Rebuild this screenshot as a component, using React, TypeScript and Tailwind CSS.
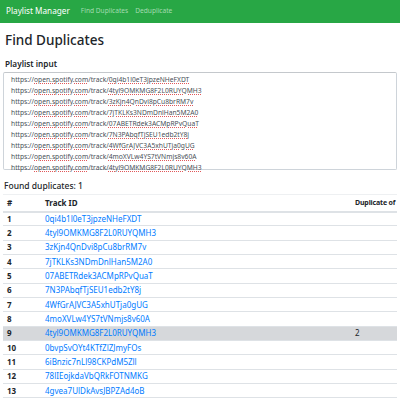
import React from 'react';

const urls = [
  '0qi4b1l0eT3jpzeNHeFXDT',
  '4tyl9OMKMG8F2L0RUYQMH3',
  '3zKjn4QnDvi8pCu8brRM7v',
  '7jTKLKs3NDmDnlHan5M2A0',
  '07ABETRdek3ACMpRPvQuaT',
  '7N3PAbqfTjSEU1edb2tY8j',
  '4WfGrAJVC3A5xhUTja0gUG',
  '4moXVLw4YS7tVNmjs8v60A',
  '4tyl9OMKMG8F2L0RUYQMH3',
];

const tracks = [
  '0qi4b1l0eT3jpzeNHeFXDT',
  '4tyl9OMKMG8F2L0RUYQMH3',
  '3zKjn4QnDvi8pCu8brRM7v',
  '7jTKLKs3NDmDnlHan5M2A0',
  '07ABETRdek3ACMpRPvQuaT',
  '7N3PAbqfTjSEU1edb2tY8j',
  '4WfGrAJVC3A5xhUTja0gUG',
  '4moXVLw4YS7tVNmjs8v60A',
  '4tyl9OMKMG8F2L0RUYQMH3',
  '0bvpSvOYt4KTfZlZJmyFOs',
  '6iBnzic7nLl98CKPdM5Zll',
  '78lIEojkdaVbQRkFOTNMKG',
  '4gvea7UlDkAvsJBPZAd4oB',
];

// spellcheck marks, like the browser draws them in the textarea
const squiggle = 'underline decoration-dotted decoration-[#e0585a] underline-offset-[1px]';

export default function App() {
  return (
    <div className="w-[400px] h-[400px] overflow-hidden bg-white text-[#212529]" style={{ fontFamily: '"Noto Sans", "Open Sans", sans-serif' }}>
      <nav className="h-[23px] bg-[#28a745] flex items-center px-[6px]">
        <span className="text-[8.2px] text-white leading-none">Playlist Manager</span>
        <span className="ml-[11px] text-[6.6px] text-[#a3dbb0] leading-none">Find Duplicates</span>
        <span className="ml-[7px] text-[6.6px] text-[#a3dbb0] leading-none">Deduplicate</span>
      </nav>

      <div className="px-[3px]">
        <h1 className="mt-[6px] h-[22px] text-[13.5px] font-medium leading-[22px] pl-[2px]">Find Duplicates</h1>

        <div className="mt-[7px] h-[12px] text-[8.2px] font-semibold leading-[12px] pl-[2px]">Playlist input</div>

        <div className="mt-[2px] h-[98px] border border-[#ced4da] border-t-[#c4c8cc] rounded-[2px] pt-[1px] pl-[7px] text-[6.7px] leading-[11px] text-[#495057]">
          {urls.map((id, i) => (
            <div key={i} className="whitespace-nowrap">
              https://<span className={squiggle}>open.spotify</span>.<span className={squiggle}>com</span>/track/<span className={squiggle}>{id}</span>
            </div>
          ))}
        </div>

        <div className="mt-[10px] h-[12px] text-[8.5px] font-medium leading-[12px] pl-[1px]">Found duplicates: 1</div>

        <table className="mt-[2px] w-full table-fixed border-collapse text-[8px]">
          <colgroup>
            <col className="w-[42px]" />
            <col />
            <col className="w-[42px]" />
          </colgroup>
          <thead>
            <tr className="h-[17px] border-t border-[#eef0f2] border-b-2 border-b-[#dee2e6]">
              <th className="text-left font-bold pl-[4px] leading-none">#</th>
              <th className="text-left font-bold leading-none">Track ID</th>
              <th className="text-left font-bold text-[7px] tracking-[-0.15px] whitespace-nowrap leading-none">Duplicate of</th>
            </tr>
          </thead>
          <tbody>
            {tracks.map((t, i) => (
              <tr key={i} className={`h-[14.35px] border-b border-[#dee2e6] ${i === 8 ? 'bg-[#d6d8db]' : ''}`}>
                <td className="font-bold pl-[4px] leading-none">{i + 1}</td>
                <td className="text-[#007bff] leading-none">{t}</td>
                <td className="leading-none">{i === 8 ? '2' : ''}</td>
              </tr>
            ))}
          </tbody>
        </table>
      </div>
    </div>
  );
}
